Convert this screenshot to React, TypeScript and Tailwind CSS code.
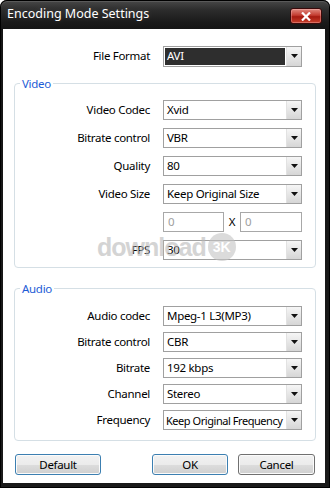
import React from "react";

const F = "font-['Noto_Sans',sans-serif]";
const T = "text-[11.5px] tracking-[-0.3px] leading-none whitespace-nowrap";

function Arrow() {
  return (
    <div className="w-[15px] shrink-0 h-full flex items-center justify-center border-l border-[#e2e2e2] bg-[linear-gradient(to_bottom,#f6f6f6,#d6d6d6)]">
      <svg width="7" height="4" viewBox="0 0 7 4">
        <path d="M0 0H7L3.5 4Z" fill="#111" />
      </svg>
    </div>
  );
}

function Select({ value, dark, tight }: { value: string; dark?: boolean; tight?: boolean }) {
  return (
    <div className={dark ? "h-[21px] w-[139px] border border-[#a0a0a0] flex bg-white" : "h-[20px] w-[139px] border border-[#a0a0a0] flex bg-white"}>
      <div className={dark ? "flex-1 min-w-0 overflow-hidden flex items-center pl-[2px] bg-[#2e2e2e] text-white border border-white" : tight ? "flex-1 min-w-0 flex items-center pl-[2px] text-black" : "flex-1 min-w-0 overflow-hidden flex items-center pl-[3px] text-black"}>
        <span className={tight ? "text-[11px] tracking-[-0.45px] leading-none whitespace-nowrap" : T}>{value}</span>
      </div>
      <Arrow />
    </div>
  );
}

function Row({ label, value, w = 135, tight }: { label: string; value: string; w?: number; tight?: boolean }) {
  return (
    <div className="flex items-center h-[20px]">
      <div className={(w === 135 ? "w-[135px] " : "w-[147px] ") + "text-right text-black " + T}>{label}</div>
      <div className="ml-[13px]">
        <Select value={value} dark={w !== 135} tight={tight} />
      </div>
    </div>
  );
}

function Group({ title, children, cls }: { title: string; children: React.ReactNode; cls: string }) {
  return (
    <div className={"relative ml-[11px] mr-[9px] border border-[#d5dfe5] rounded-[4px] " + cls}>
      <span className="absolute left-[5px] -top-[8px] bg-white px-[2px] text-[11.5px] tracking-[-0.3px] leading-[15px] text-[#1d5cd6]">{title}</span>
      {children}
    </div>
  );
}

function Btn({ label, focus, w }: { label: string; focus?: boolean; w: string }) {
  return (
    <div
      className={
        (focus ? "border-[#3c7fb1] " : "border-[#707070] ") +
        w +
        " h-[21px] rounded-[3px] border flex items-center justify-center text-black shadow-[inset_0_0_0_1px_#fbfbfb] bg-[linear-gradient(to_bottom,#f2f2f2_0%,#ebebeb_50%,#dddddd_50%,#cfcfcf_100%)] " +
        T
      }
    >
      {label}
    </div>
  );
}

export default function App() {
  return (
    <div className={F + " w-[330px] h-[488px] flex flex-col rounded-t-[7px] pl-[3px] pr-[5px] pb-[5px] bg-[linear-gradient(to_bottom,#4a4a4a_0px,#2c2c2c_10px,#1a1a1a_22px,#151515_29px,#1a1a1a_100%)] shadow-[inset_0_0_0_1px_#000,inset_0_1px_0_1px_#5a5a5a]"}>
      <div className="h-[29px] flex items-start relative">
        <span className="mt-[8px] ml-[4px] text-[12.5px] leading-none text-white [text-shadow:0_0_6px_rgba(255,255,255,0.15)]">Encoding Mode Settings</span>
        <div className="absolute right-[3px] top-[8px] w-[32px] h-[16px] rounded-[3px] border border-[#3a0a0a] bg-[linear-gradient(to_bottom,#e08a80_0%,#c43c30_45%,#a51a10_55%,#c8402c_100%)] flex items-center justify-center shadow-[inset_0_0_0_1px_rgba(255,200,200,0.35)]">
          <svg width="10" height="9" viewBox="0 0 10 9">
            <path d="M1 0.5L9 8.5M9 0.5L1 8.5" stroke="#fff" strokeWidth="2.2" />
          </svg>
        </div>
      </div>
      <div className="flex-1 bg-white relative flex flex-col">
        <div className="pt-[17px]">
          <Row label="File Format" value="AVI" w={147} />
        </div>
        <Group title="Video" cls="mt-[17px] pt-[16px] pb-[7px]">
          <div className="flex flex-col gap-[8px]">
            <Row label="Video Codec" value="Xvid" />
            <Row label="Bitrate control" value="VBR" />
            <Row label="Quality" value="80" />
            <Row label="Video Size" value="Keep Original Size" />
            <div className="flex items-center h-[20px] ml-[148px]">
              <div className={"w-[61px] h-[20px] border border-[#a8a8a8] flex items-center pl-[4px] text-[#a0a0a0] " + T}>0</div>
              <div className={"w-[16px] text-center text-black " + T}>X</div>
              <div className={"w-[62px] h-[20px] border border-[#a8a8a8] flex items-center pl-[4px] text-[#a0a0a0] " + T}>0</div>
            </div>
            <Row label="FPS" value="30" />
          </div>
        </Group>
        <Group title="Audio" cls="mt-[20px] pt-[17px] pb-[10px]">
          <div className="flex flex-col gap-[6px]">
            <Row label="Audio codec" value="Mpeg-1 L3(MP3)" />
            <Row label="Bitrate control" value="CBR" />
            <Row label="Bitrate" value="192 kbps" />
            <Row label="Channel" value="Stereo" />
            <Row label="Frequency" value="Keep Original Frequency" tight />
          </div>
        </Group>
        <div className="flex mt-[13px] ml-[12px]">
          <Btn label="Default" focus w="w-[86px]" />
          <div className="ml-[51px]"><Btn label="OK" focus w="w-[76px]" /></div>
          <div className="ml-[10px]"><Btn label="Cancel" w="w-[77px]" /></div>
        </div>
        <div className="absolute left-[94px] top-[204px] flex items-center pointer-events-none opacity-60">
          <span className="font-['Liberation_Sans',sans-serif] font-bold text-[25px] leading-none text-[#b8b8b8] tracking-[-1px]">download</span>
          <div className="ml-[2px] w-[28px] h-[28px] rounded-full bg-[#c4c4c4] flex items-center justify-center">
            <span className="font-['Liberation_Sans',sans-serif] font-bold text-[14px] text-white leading-none">3K</span>
          </div>
        </div>
      </div>
    </div>
  );
}
